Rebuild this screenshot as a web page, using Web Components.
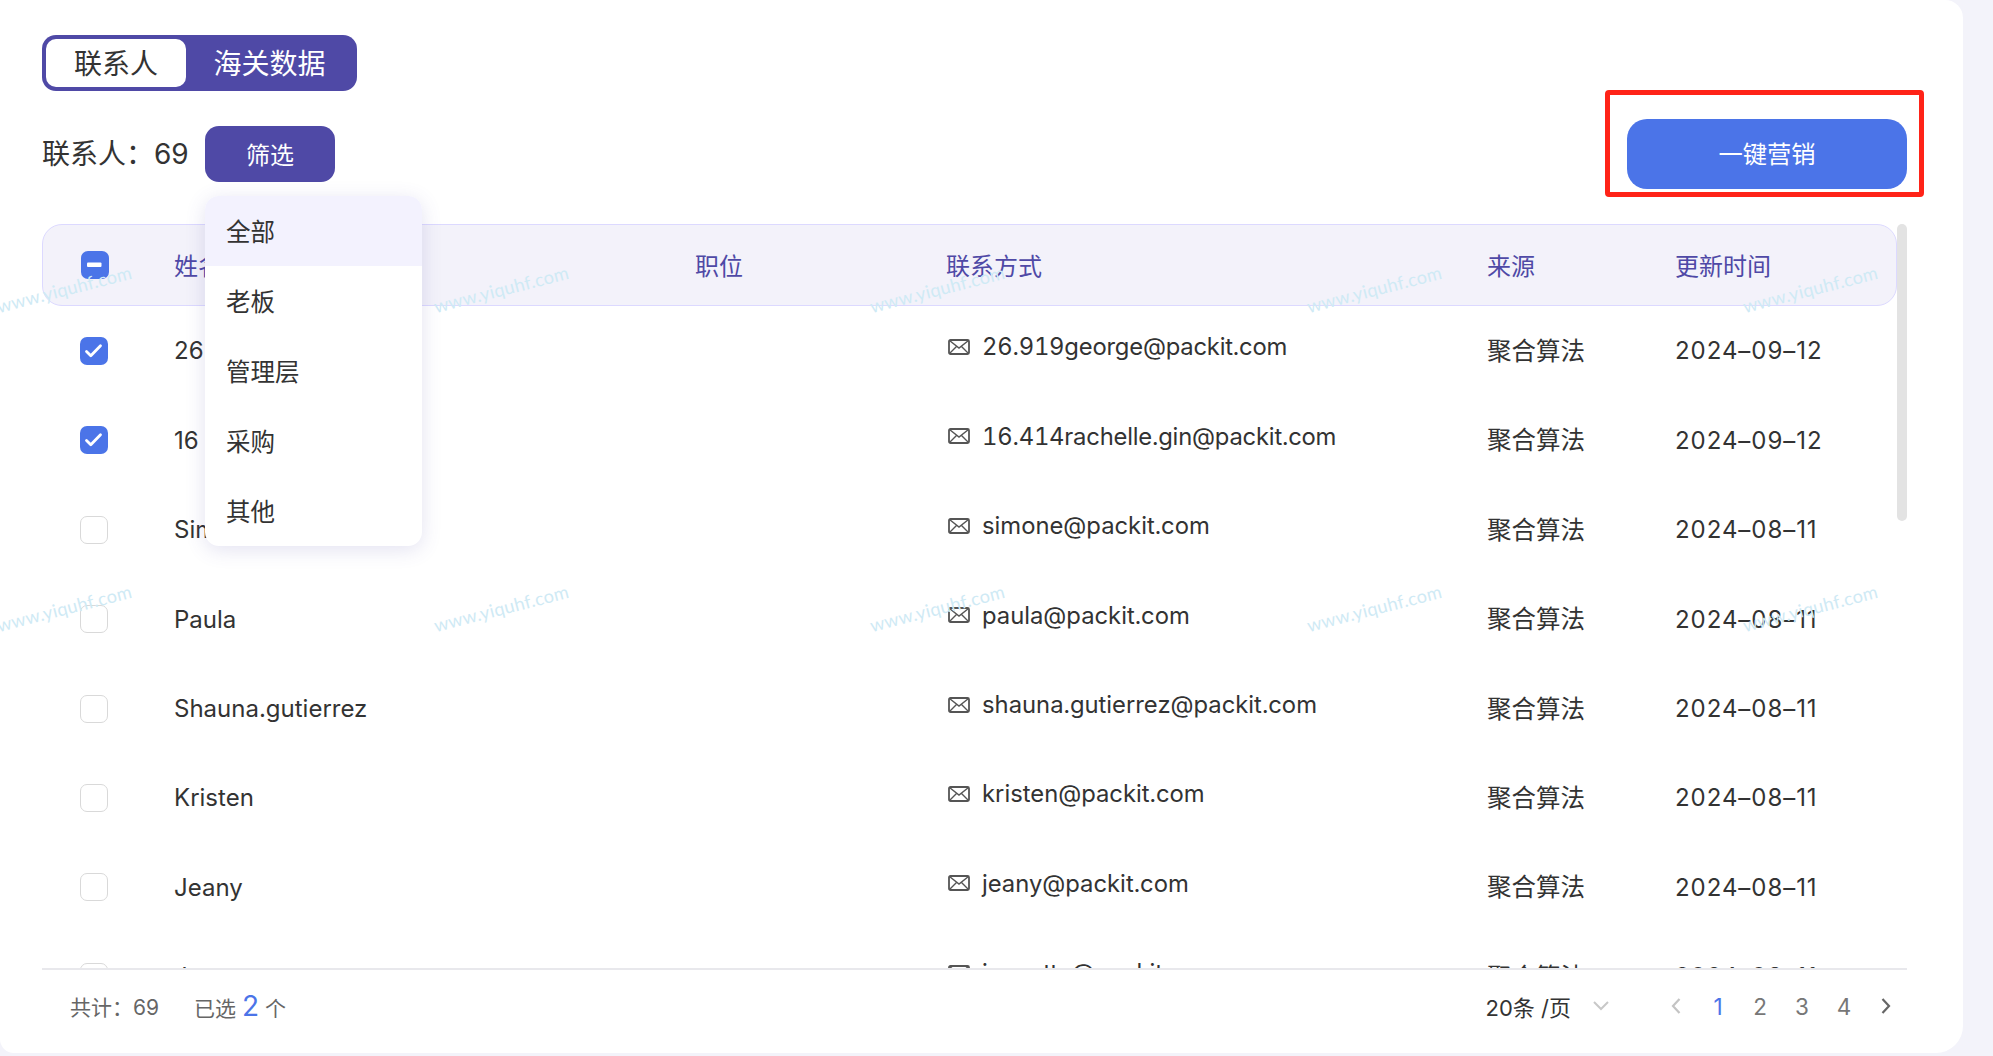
<!DOCTYPE html>
<html lang="zh">
<head>
<meta charset="utf-8">
<title>联系人</title>
<style>
    html, body {
        margin: 0;
        height: 100%;
        background: #f3f3fa;
        font-family: "Inter", "Noto Sans CJK SC", sans-serif;
    }
    body { overflow: hidden; }
</style>
</head>
<body>
<contact-page></contact-page>

<script>
const ROWS = [
    { name: '26', email: '26.919george@packit.com', date: '2024–09–12', checked: true },
    { name: '16', email: '16.414rachelle.gin@packit.com', date: '2024–09–12', checked: true },
    { name: 'Simone', email: 'simone@packit.com', date: '2024–08–11' },
    { name: 'Paula', email: 'paula@packit.com', date: '2024–08–11' },
    { name: 'Shauna.gutierrez', email: 'shauna.gutierrez@packit.com', date: '2024–08–11' },
    { name: 'Kristen', email: 'kristen@packit.com', date: '2024–08–11' },
    { name: 'Jeany', email: 'jeany@packit.com', date: '2024–08–11' },
    { name: 'Jeanette', email: 'jeanette@packit.com', date: '2024–08–11' }
];

const COLUMNS = '132px 521px 251px 541px 188px 1fr';

class TabSwitch extends HTMLElement {
    constructor() {
        super();
        this.attachShadow({ mode: 'open' });
        this.shadowRoot.innerHTML = `
            <style>
                :host {
                    display: inline-flex;
                    box-sizing: border-box;
                    height: 56px;
                    width: 315px;
                    padding: 4px;
                    border-radius: 14px;
                    background: #4f49a6;
                    font-size: 28px;
                    color: #fff;
                }
                span {
                    display: flex;
                    align-items: center;
                    justify-content: center;
                    padding-bottom: 2px;
                }
                .on {
                    width: 140px;
                    background: #fff;
                    color: #333;
                    border-radius: 10px;
                }
                .off { flex: 1; }
            </style>
            <span class="on">联系人</span>
            <span class="off">海关数据</span>
        `;
    }
}

class FilterMenu extends HTMLElement {
    constructor() {
        super();
        this.attachShadow({ mode: 'open' });
        const items = ['全部', '老板', '管理层', '采购', '其他'];
        this.shadowRoot.innerHTML = `
            <style>
                :host {
                    display: block;
                    position: absolute;
                    left: 0;
                    top: 70px;
                    width: 217px;
                    background: #fff;
                    border-radius: 14px;
                    overflow: hidden;
                    box-shadow: 0 4px 20px rgba(79,73,166,.16);
                    z-index: 5;
                }
                div {
                    box-sizing: border-box;
                    height: 70px;
                    display: flex;
                    align-items: center;
                    padding: 0 0 2px 21px;
                    font-size: 24.500px;
                    color: #333;
                }
                .active { background: #f3f2fe; }
            </style>
            ${items.map((t, i) => `<div class="${i === 0 ? 'active' : ''}">${t}</div>`).join('')}
        `;
    }
}

class ToolBar extends HTMLElement {
    constructor() {
        super();
        this.attachShadow({ mode: 'open' });
        this.shadowRoot.innerHTML = `
            <style>
                :host {
                    display: flex;
                    align-items: center;
                    height: 70px;
                    margin-top: 28px;
                    position: relative;
                    z-index: 4;
                }
                .count {
                    font-size: 28px;
                    color: #333;
                    width: 163px;
                    white-space: nowrap;
                    margin-top: -5px;
                }
                .filter {
                    position: relative;
                    box-sizing: border-box;
                    width: 130px;
                    height: 56px;
                    padding-bottom: 2px;
                    display: flex;
                    align-items: center;
                    justify-content: center;
                    background: #4f49a6;
                    color: #fff;
                    border-radius: 14px;
                    font-size: 24px;
                }
                .promo {
                    margin-left: auto;
                    position: relative;
                    box-sizing: border-box;
                    width: 280px;
                    height: 70px;
                    padding-bottom: 4px;
                    display: flex;
                    align-items: center;
                    justify-content: center;
                    background: #4b74e8;
                    color: #fff;
                    border-radius: 20px;
                    font-size: 24.300px;
                }
                .promo::after {
                    content: '';
                    position: absolute;
                    left: -22px;
                    right: -17px;
                    top: -29px;
                    bottom: -8px;
                    border: 5px solid #ff2318;
                    border-radius: 4px;
                }
            </style>
            <span class="count">联系人：69</span>
            <span class="filter">筛选<filter-menu></filter-menu></span>
            <span class="promo">一键营销</span>
        `;
    }
}

class CheckBox extends HTMLElement {
    constructor() {
        super();
        this.attachShadow({ mode: 'open' });
    }

    connectedCallback() {
        const state = this.getAttribute('state');
        let mark = '';
        if (state === 'checked') {
            mark = '<svg viewBox="0 0 28 28" width="28" height="28"><path d="M6.500 14.500l4.300 4.300 9.700-10" fill="none" stroke="#fff" stroke-width="2.800" stroke-linecap="round" stroke-linejoin="round"/></svg>';
        } else if (state === 'some') {
            mark = '<svg viewBox="0 0 28 28" width="28" height="28"><rect x="6" y="11.500" width="14.500" height="4.500" rx="1" fill="#fff"/></svg>';
        }
        this.shadowRoot.innerHTML = `
            <style>
                :host {
                    display: block;
                    box-sizing: border-box;
                    width: 28px;
                    height: 28px;
                    border-radius: 7px;
                    background: ${state ? '#4b74e8' : '#fff'};
                    ${state ? '' : 'border: 1px solid #d9d9d9;'}
                }
                svg { display: block; }
            </style>
            ${mark}
        `;
    }
}

class ContactRow extends HTMLElement {
    constructor() {
        super();
        this.attachShadow({ mode: 'open' });
    }

    set data(row) {
        // addresses that start with digits run a little wide in this font
        const tight = /^\d/.test(row.email) ? 'tight' : '';
        this.shadowRoot.innerHTML = `
            <style>
                :host {
                    display: grid;
                    grid-template-columns: ${COLUMNS};
                    align-items: center;
                    height: 89.400px;
                    font-size: 24px;
                    color: #333;
                }
                check-box { margin-left: 38px; }
                .date { letter-spacing: .95px; }
                .source { font-size: 24.500px; margin-top: -3px; }
                .mail {
                    display: flex;
                    align-items: center;
                    gap: 12px;
                    margin: -8px 0 0 2px;
                    white-space: nowrap;
                    font-size: 23.800px;
                    font-feature-settings: "tnum";
                }
                .mail.tight { letter-spacing: -.2px; }
                .mail svg { flex: none; }
            </style>
            <check-box state="${row.checked ? 'checked' : ''}"></check-box>
            <span class="name">${row.name}</span>
            <span></span>
            <span class="mail ${tight}">
                <svg width="22" height="16" viewBox="0 0 22 16"><rect x="1" y="1" width="20" height="14" rx="1.500" fill="none" stroke="#555" stroke-width="1.800"/><path d="M1.500 1.500L11 9l9.500-7.500M1.500 14.500l7-7M20.500 14.500l-7-7" fill="none" stroke="#555" stroke-width="1.400"/></svg>
                ${row.email}
            </span>
            <span class="source">聚合算法</span>
            <span class="date">${row.date}</span>
        `;
    }
}

class ContactTable extends HTMLElement {
    constructor() {
        super();
        this.attachShadow({ mode: 'open' });
        this.shadowRoot.innerHTML = `
            <style>
                :host {
                    display: block;
                    position: relative;
                    height: 744px;
                    margin-top: 35px;
                    overflow: hidden;
                    border-bottom: 2px solid #e8e8ec;
                }
                .head {
                    display: grid;
                    grid-template-columns: 131px 521px 251px 541px 188px 1fr;
                    align-items: center;
                    box-sizing: border-box;
                    width: 1855px;
                    height: 82px;
                    background: #f3f2fa;
                    border: 1px solid #dcd9ff;
                    border-radius: 20px;
                    font-size: 24px;
                    color: #4f49a6;
                }
                .head span { margin-top: -2px; }
                .head check-box { margin-left: 38px; }
                .rows { padding-top: .3px; }
                .bar {
                    position: absolute;
                    right: 0;
                    top: 0;
                    width: 10px;
                    height: 297px;
                    background: #e3e3e3;
                    border-radius: 5px;
                }
            </style>
            <div class="head">
                <check-box state="some"></check-box>
                <span>姓名</span>
                <span>职位</span>
                <span>联系方式</span>
                <span>来源</span>
                <span>更新时间</span>
            </div>
            <div class="rows"></div>
            <div class="bar"></div>
        `;
        const rows = this.shadowRoot.querySelector('.rows');
        ROWS.forEach(row => {
            const el = document.createElement('contact-row');
            rows.appendChild(el);
            el.data = row;
        });
    }
}

class PageFooter extends HTMLElement {
    constructor() {
        super();
        this.attachShadow({ mode: 'open' });
        this.shadowRoot.innerHTML = `
            <style>
                :host {
                    display: flex;
                    align-items: center;
                    height: 72px;
                    padding-left: 28px;
                    font-size: 21px;
                    color: #666;
                }
                .sum { width: 124px; white-space: nowrap; }
                b {
                    font-weight: 400;
                    font-size: 28px;
                    color: #4b74e8;
                    margin: 0 6px;
                }
                .size {
                    margin-left: auto;
                    font-size: 22px;
                    color: #333;
                    white-space: nowrap;
                    margin-right: 22px;
                }
                svg { display: block; flex: none; }
                .pages {
                    display: grid;
                    grid-template-columns: repeat(6, 42px);
                    justify-items: center;
                    align-items: center;
                    margin-left: 46px;
                    font-size: 22.500px;
                    color: #777;
                }
                .pages .cur { color: #4b74e8; }
            </style>
            <span class="sum">共计：69</span>
            <span>已选<b>2</b>个</span>
            <span class="size">20条 /页</span>
            <svg width="16" height="10" viewBox="0 0 16 10"><path d="M1 1l7 7 7-7" fill="none" stroke="#c8c8c8" stroke-width="2"/></svg>
            <div class="pages">
                <svg width="10" height="16" viewBox="0 0 10 16"><path d="M8.500 1L2 8l6.500 7" fill="none" stroke="#c4c4c4" stroke-width="2.200"/></svg>
                <span class="cur">1</span>
                <span>2</span>
                <span>3</span>
                <span>4</span>
                <svg width="10" height="16" viewBox="0 0 10 16"><path d="M1.500 1L8 8l-6.500 7" fill="none" stroke="#666" stroke-width="2.200"/></svg>
            </div>
        `;
    }
}

class WaterMark extends HTMLElement {
    constructor() {
        super();
        this.attachShadow({ mode: 'open' });
        const spots = [];
        [0, 1].forEach(r => {
            [0, 1, 2, 3, 4].forEach(c => {
                spots.push(`<span style="left:${c * 436.500}px;top:${r * 319 + 295}px">www.yiquhf.com</span>`);
            });
        });
        this.shadowRoot.innerHTML = `
            <style>
                :host {
                    display: block;
                    position: absolute;
                    inset: 0;
                    overflow: hidden;
                    pointer-events: none;
                    z-index: 3;
                }
                span {
                    position: absolute;
                    font-family: "Lato", sans-serif;
                    font-size: 18.200px;
                    letter-spacing: .3px;
                    line-height: 22px;
                    color: #cfeaf5;
                    transform: rotate(-14.500deg);
                    transform-origin: left bottom;
                    white-space: nowrap;
                }
            </style>
            ${spots.join('')}
        `;
    }
}

class ContactPage extends HTMLElement {
    constructor() {
        super();
        this.attachShadow({ mode: 'open' });
        this.shadowRoot.innerHTML = `
            <style>
                :host {
                    display: block;
                    position: relative;
                    box-sizing: border-box;
                    width: 1963px;
                    height: 1053px;
                    padding: 35px 0 0 42px;
                    background: #fff;
                    border-radius: 0 18px 27px 14px;
                    overflow: hidden;
                }
                main { width: 1865px; }
            </style>
            <main>
                <tab-switch></tab-switch>
                <tool-bar></tool-bar>
                <contact-table></contact-table>
                <page-footer></page-footer>
            </main>
            <water-mark></water-mark>
        `;
    }
}

customElements.define('tab-switch', TabSwitch);
customElements.define('filter-menu', FilterMenu);
customElements.define('tool-bar', ToolBar);
customElements.define('check-box', CheckBox);
customElements.define('contact-row', ContactRow);
customElements.define('contact-table', ContactTable);
customElements.define('page-footer', PageFooter);
customElements.define('water-mark', WaterMark);
customElements.define('contact-page', ContactPage);
</script>
</body>
</html>
